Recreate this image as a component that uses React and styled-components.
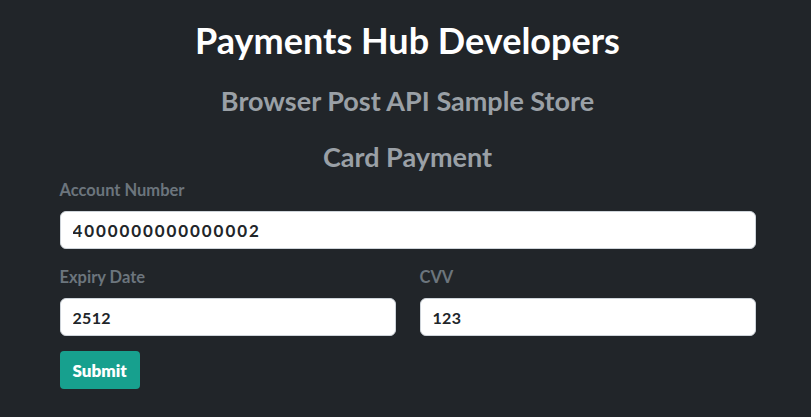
import React from 'react';
import styled, { createGlobalStyle } from 'styled-components';

const GlobalStyle = createGlobalStyle`
  html, body {
    margin: 0;
    padding: 0;
    background: #212529;
  }
  body {
    font-family: Lato, 'Noto Sans', sans-serif;
  }
  * {
    box-sizing: border-box;
  }
`;

const Page = styled.div`
  width: 696px;
  margin: 0 auto;
  padding-top: 20px;
  min-height: 417px;
  transform: translateX(2px);
`;

const Title = styled.h1`
  margin: 0;
  text-align: center;
  color: #fff;
  font-size: 36px;
  font-weight: 700;
  line-height: 40px;
`;

const SubTitle = styled.h3`
  margin: ${(props) => props.mt || 0} 0 0;
  text-align: center;
  color: #9aa0a6;
  font-size: 27px;
  font-weight: 700;
  line-height: 32px;
`;

const Form = styled.form`
  margin-top: 7px;
  display: flex;
  flex-direction: column;
  gap: 18px;
`;

const Row = styled.div`
  display: grid;
  grid-template-columns: 1fr 1fr;
  gap: 24px;
`;

const Field = styled.div`
  display: flex;
  flex-direction: column;
  gap: 11px;
`;

const Label = styled.label`
  color: #6c757d;
  font-size: 16.5px;
  font-weight: 700;
  line-height: 20px;
`;

const Input = styled.input`
  height: 38px;
  width: 100%;
  padding: 0 12px;
  border: 1px solid #ced4da;
  border-radius: 6px;
  background: #fff;
  color: #212529;
  font-family: Lato, 'Noto Sans', sans-serif;
  font-size: ${(props) => (props.wide ? '17px' : '16px')};
  font-weight: 700;
  letter-spacing: ${(props) => (props.wide ? '1.9px' : '0.3px')};
  outline: none;
`;

const Button = styled.button`
  align-self: flex-start;
  margin-top: -3px;
  height: 38px;
  padding: 0 13px;
  border: none;
  border-radius: 4px;
  background: #17a08e;
  color: #fff;
  font-family: Lato, 'Noto Sans', sans-serif;
  font-size: 17px;
  font-weight: 800;
`;

const App = () => {
  return (
    <>
      <GlobalStyle />
      <Page>
        <Title>Payments Hub Developers</Title>
        <SubTitle mt="25px">Browser Post API Sample Store</SubTitle>
        <SubTitle mt="24px">Card Payment</SubTitle>
        <Form onSubmit={(e) => e.preventDefault()}>
          <Field>
            <Label>Account Number</Label>
            <Input wide defaultValue="4000000000000002" />
          </Field>
          <Row>
            <Field>
              <Label>Expiry Date</Label>
              <Input defaultValue="2512" />
            </Field>
            <Field>
              <Label>CVV</Label>
              <Input defaultValue="123" />
            </Field>
          </Row>
          <Button type="submit">Submit</Button>
        </Form>
      </Page>
    </>
  );
};

export default App;
